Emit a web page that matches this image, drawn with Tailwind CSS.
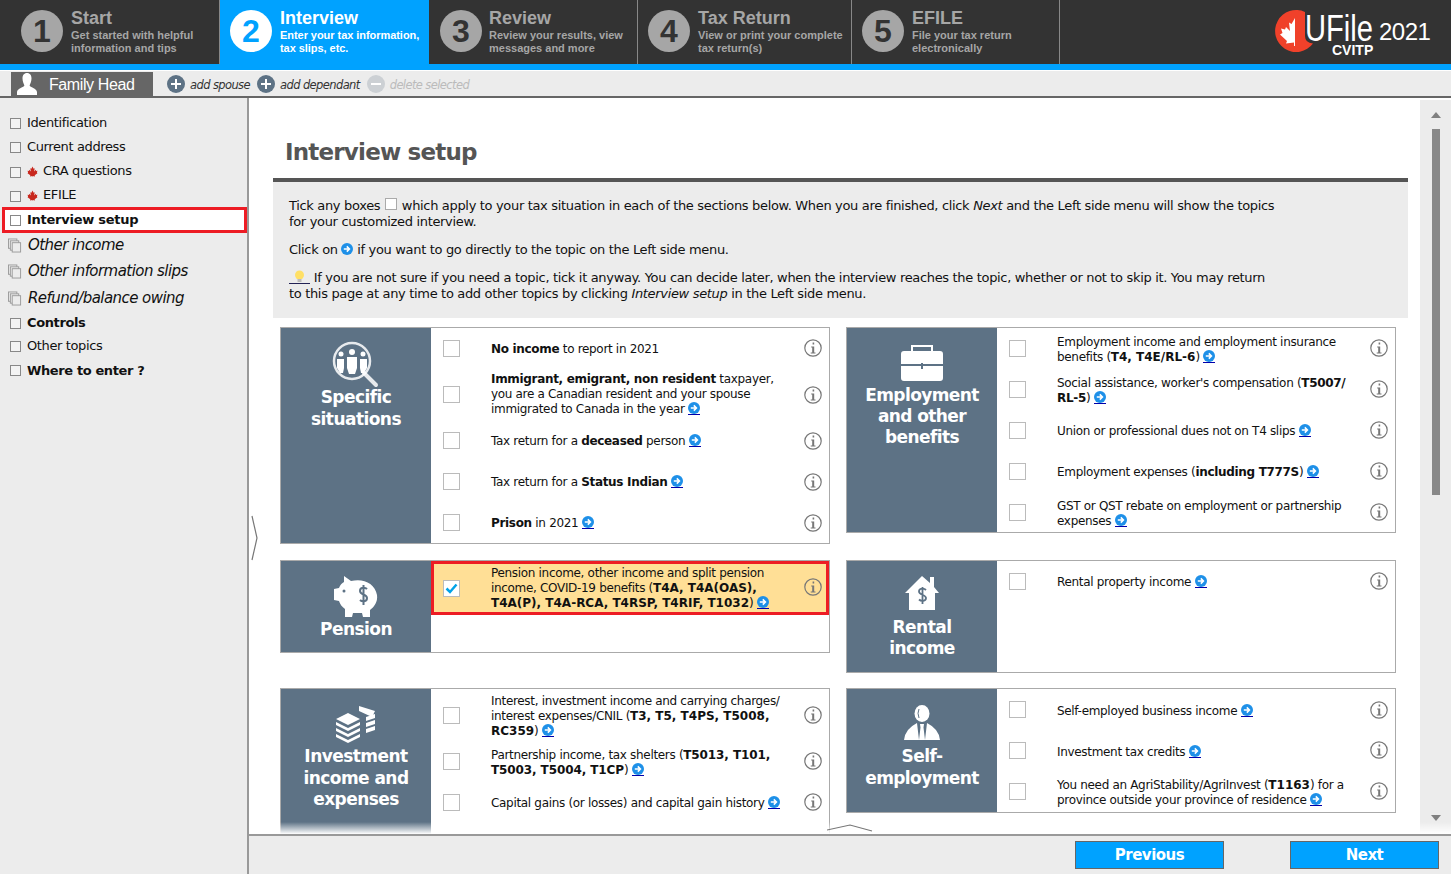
<!DOCTYPE html>
<html>
<head>
    <title>UFile 2021 - Interview setup</title>
    <script src="https://cdn.jsdelivr.net/npm/@tailwindcss/browser@4"></script>
</head>
<body class="font-['DejaVu_Sans',sans-serif] text-[#111]">
    <svg class="hidden">
        <symbol id="info" viewBox="0 0 18 18">
            <circle cx="9" cy="9" r="8.2" fill="none" stroke="#777" stroke-width="1.2"/>
            <path d="M8.6 3.6h1.6v1.8H8.6zM7.2 7.4h3v6h1.3v1H6.7v-1h1.5V8.4h-1z" fill="#777"/>
        </symbol>
        <symbol id="go" viewBox="0 0 12 12">
            <circle cx="6" cy="6" r="6" fill="#1e90e8"/>
            <path d="M2.8 6h5M5.8 3.4 8.4 6 5.8 8.6" fill="none" stroke="#fff" stroke-width="1.6"/>
        </symbol>
        <symbol id="leaf" viewBox="0 0 20 20">
            <path d="M10 1 8 5 6 4l1 6-3-3-.6 2L1 8.600l1 3.400-1 1 5 4-.5 2 4.200-.6V20h.6v-1.600l4.200.6-.5-2 5-4-1-1 1-3.400-2.400.4-.6-2-3 3 1-6-2 1z" fill="#c8281e"/>
        </symbol>
        <symbol id="pages" viewBox="0 0 15 15">
            <rect x="0.500" y="0.500" width="9" height="10" fill="#ececec" stroke="#999"/>
            <rect x="2.500" y="2.500" width="9" height="10" fill="#ececec" stroke="#999"/>
            <rect x="4.500" y="4.500" width="9" height="10" fill="#ececec" stroke="#999"/>
        </symbol>
    </svg>

    <div class="relative flex flex-col w-[1451px] h-[874px] overflow-hidden bg-white">
        <!-- step bar -->
        <div class="flex h-16 shrink-0 bg-[#333] font-['Liberation_Sans',sans-serif]">
            <div class="flex w-[219px] pl-[21px] pt-[10px] gap-2">
                <div class="flex items-center justify-center w-[42px] h-[42px] rounded-full bg-[#a6a6a6] text-[#333] text-[32px] font-bold">1</div>
                <div class="text-[#a6a6a6]">
                    <p class="text-[18px] leading-[17px] font-bold">Start</p>
                    <p class="mt-[2px] text-[11px] leading-[13px] font-bold">Get started with helpful<br>information and tips</p>
                </div>
            </div>
            <div class="flex w-[210px] pl-[10px] pt-[10px] gap-2 bg-[#00a2ff] border-l border-[#888]">
                <div class="flex items-center justify-center w-[42px] h-[42px] rounded-full bg-white text-[#00a2ff] text-[32px] font-bold">2</div>
                <div class="text-white">
                    <p class="text-[18px] leading-[17px] font-bold">Interview</p>
                    <p class="mt-[2px] text-[11px] leading-[13px] font-bold tracking-[-0.05px]">Enter your tax information,<br>tax slips, etc.</p>
                </div>
            </div>
            <div class="flex w-[209px] pl-[11px] pt-[10px] gap-[7px] border-r border-[#888]">
                <div class="flex items-center justify-center w-[42px] h-[42px] rounded-full bg-[#a6a6a6] text-[#333] text-[32px] font-bold">3</div>
                <div class="text-[#a6a6a6]">
                    <p class="text-[18px] leading-[17px] font-bold">Review</p>
                    <p class="mt-[2px] text-[11px] leading-[13px] font-bold">Review your results, view<br>messages and more</p>
                </div>
            </div>
            <div class="flex w-[214px] pl-[10px] pt-[10px] gap-2 border-r border-[#888]">
                <div class="flex items-center justify-center w-[42px] h-[42px] rounded-full bg-[#a6a6a6] text-[#333] text-[32px] font-bold">4</div>
                <div class="text-[#a6a6a6]">
                    <p class="text-[18px] leading-[17px] font-bold">Tax Return</p>
                    <p class="mt-[2px] text-[11px] leading-[13px] font-bold">View or print your complete<br>tax return(s)</p>
                </div>
            </div>
            <div class="flex w-[208px] pl-[10px] pt-[10px] gap-2 border-r border-[#888]">
                <div class="flex items-center justify-center w-[42px] h-[42px] rounded-full bg-[#a6a6a6] text-[#333] text-[32px] font-bold">5</div>
                <div class="text-[#a6a6a6]">
                    <p class="text-[18px] leading-[17px] font-bold">EFILE</p>
                    <p class="mt-[2px] text-[11px] leading-[13px] font-bold">File your tax return<br>electronically</p>
                </div>
            </div>
            <!-- logo -->
            <div class="flex-1 flex justify-end pr-[19px] pt-[10px]">
                <div class="relative w-[158px] h-[48px]">
                    <svg class="absolute left-[1px] top-0" width="42" height="42" viewBox="0 0 42 42">
                        <path d="M30 2V26Q30 33 38 33.500A21 21 0 1 1 30 2Z" fill="#f0412a"/>
                        <path d="M20 8 16.500 14 14 12.500 15 21 11 17 10 19.500 6 18.500 7.500 23 5 24.500 12 31 11 33.500 19 32.500V36H20Z" fill="#fff"/>
                    </svg>
                    <span class="absolute left-[31px] top-[4px] text-[36px] leading-[30px] text-white origin-left scale-x-[.81]">UFile</span>
                    <span class="absolute left-[105px] top-[10px] text-[24px] leading-[24px] text-white tracking-[-0.5px]">2021</span>
                    <span class="absolute left-[58px] top-[34px] text-[14px] leading-[12px] font-bold text-white">CVITP</span>
                </div>
            </div>
        </div>
        <div class="h-[6px] shrink-0 bg-[#00a2ff]"></div>

        <!-- family bar -->
        <div class="flex items-end h-[28px] shrink-0 pl-[11px] bg-[#ececec] border-t border-white border-b-2 border-b-[#666]">
            <div class="flex items-center w-[142px] h-[24px] pl-[6px] gap-3 bg-[#666] text-white font-['Liberation_Sans',sans-serif] text-[16px] tracking-[-0.4px]">
                <svg width="20" height="22" viewBox="0 0 20 22"><path d="M10 0c3 0 4.500 2.300 4.500 5.500S13 11 12.600 12.500c0 1.500 7.400 3 7.400 6.500v3H0v-3c0-3.500 7.400-5 7.400-6.500C7 11 5.500 8.700 5.500 5.500S7 0 10 0z" fill="#fff"/></svg>
                <span class="pt-[2px]">Family Head</span>
            </div>
            <div class="flex items-center h-[24px] pl-[14px] gap-[5px] text-[11.500px] italic text-[#333] tracking-[-0.6px]">
                <span class="flex items-center justify-center w-[18px] h-[18px] rounded-full bg-[#5d7285]"><svg width="10" height="10" viewBox="0 0 10 10"><path d="M5 0v10M0 5h10" stroke="#fff" stroke-width="2"/></svg></span>
                <span class="mr-[2px] pt-[3px]">add spouse</span>
                <span class="flex items-center justify-center w-[18px] h-[18px] rounded-full bg-[#5d7285]"><svg width="10" height="10" viewBox="0 0 10 10"><path d="M5 0v10M0 5h10" stroke="#fff" stroke-width="2"/></svg></span>
                <span class="mr-[2px] pt-[3px]">add dependant</span>
                <span class="flex items-center justify-center w-[18px] h-[18px] rounded-full bg-[#ccd0d4]"><svg width="10" height="10" viewBox="0 0 10 10"><path d="M0 5h10" stroke="#fff" stroke-width="2"/></svg></span>
                <span class="pt-[3px] text-[#bbb]">delete selected</span>
            </div>
        </div>

        <div class="flex flex-1 min-h-0">
            <!-- left menu -->
            <aside class="relative w-[249px] shrink-0 pt-[12px] bg-[#ececec] border-r-2 border-[#999] text-[13px] tracking-[-0.38px]">
                <div class="flex items-center h-[24.500px] pl-[10px] gap-[6px]"><span class="w-[11px] h-[11px] mt-[2px] bg-white/40 border border-[#888]"></span>Identification</div>
                <div class="flex items-center h-[24.500px] pl-[10px] gap-[6px]"><span class="w-[11px] h-[11px] mt-[2px] bg-white/40 border border-[#888]"></span>Current address</div>
                <div class="flex items-center h-[24px] pl-[10px] gap-[6px]"><span class="w-[11px] h-[11px] mt-[2px] bg-white/40 border border-[#888]"></span><svg class="-mr-[1px]" width="11" height="11"><use href="#leaf"/></svg>CRA questions</div>
                <div class="flex items-center h-[24px] pl-[10px] gap-[6px]"><span class="w-[11px] h-[11px] mt-[2px] bg-white/40 border border-[#888]"></span><svg class="-mr-[1px]" width="11" height="11"><use href="#leaf"/></svg>EFILE</div>
                <div class="flex items-center h-[26px] ml-[2px] pl-[5px] gap-[6px] bg-white border-[3px] border-[#ed1c24] font-bold tracking-[-0.25px]"><span class="w-[11px] h-[11px] border border-[#888]"></span>Interview setup</div>
                <div class="flex items-center h-[25px] pl-[8px] gap-[6px] text-[15px] italic tracking-[-0.55px]"><svg width="14" height="15"><use href="#pages"/></svg>Other income</div>
                <div class="flex items-center h-[27px] pl-[8px] gap-[6px] text-[15px] italic tracking-[-0.55px]"><svg width="14" height="15"><use href="#pages"/></svg>Other information slips</div>
                <div class="flex items-center h-[27px] pl-[8px] gap-[6px] text-[15px] italic tracking-[-0.55px]"><svg width="14" height="15"><use href="#pages"/></svg>Refund/balance owing</div>
                <div class="flex items-center h-[22px] pl-[10px] gap-[6px] font-bold"><span class="w-[11px] h-[11px] bg-white/40 border border-[#888]"></span>Controls</div>
                <div class="flex items-center h-[24px] pl-[10px] gap-[6px]"><span class="w-[11px] h-[11px] bg-white/40 border border-[#888]"></span>Other topics</div>
                <div class="flex items-center h-[25px] pl-[10px] gap-[6px] font-bold"><span class="w-[11px] h-[11px] bg-white/40 border border-[#888]"></span>Where to enter ?</div>
                <svg class="absolute left-[250px] top-[417px] z-10" width="10" height="46" viewBox="0 0 10 46"><path d="M2 1l5 22-5 22" fill="none" stroke="#777" stroke-width="1.200"/></svg>
            </aside>

            <div class="flex flex-col flex-1 min-w-0">
                <div class="relative flex flex-1 min-h-0">
                    <!-- page content -->
                    <main class="w-[1171px] h-[736px] pl-[24px] pr-[12px] overflow-hidden">
                        <h1 class="pl-[12px] pt-[39px] h-[80px] text-[23px] leading-[30px] font-bold text-[#555] tracking-[-0.8px]">Interview setup</h1>
                        <div class="h-[140px] pl-[16px] pt-[16px] bg-[#ececec] border-t-4 border-[#555] text-[13px] leading-[16px] tracking-[-0.33px]">
                            <p>Tick any boxes <span class="inline-block w-[12px] h-[12px] mx-[1px] bg-white border border-[#aaa]"></span> which apply to your tax situation in each of the sections below. When you are finished, click <i>Next</i> and the Left side menu will show the topics<br>for your customized interview.</p>
                            <p class="mt-[12px]">Click on <svg class="inline-block align-[-1px]" width="12" height="12"><use href="#go"/></svg> if you want to go directly to the topic on the Left side menu.</p>
                            <p class="mt-[12px]"><svg class="inline-block align-[-2px]" width="21" height="14" viewBox="0 0 21 14"><circle cx="10.500" cy="5" r="4.500" fill="#ffe066"/><rect x="8.500" y="9" width="4" height="3" fill="#bbb"/><path d="M0 13.500h21" stroke="#225"/></svg> If you are not sure if you need a topic, tick it anyway. You can decide later, when the interview reaches the topic, whether or not to skip it. You may return<br>to this page at any time to add other topics by clicking <i>Interview setup</i> in the Left side menu.</p>
                        </div>

                        <div class="flex gap-x-4 pl-[7px] pt-[9px] text-[12px] leading-[15px] tracking-[-0.32px]">
                            <div class="flex flex-col w-[550px]">
                                <!-- specific situations -->
                                <section class="flex h-[217px] border border-[#aaa]">
                                    <div class="w-[150px] pt-[13px] shrink-0 bg-[#5d7285] text-center text-white text-[17px] leading-[22px] font-bold tracking-[-0.55px]">
                                        <svg class="mx-auto" width="50" height="47" viewBox="0 0 50 47" fill="none"><circle cx="21" cy="20" r="18" stroke="#fff" stroke-width="2.500" opacity=".85"/><path d="M33 32l12 12" stroke="#fff" stroke-width="4" stroke-linecap="round" opacity=".85"/><circle cx="21" cy="11" r="3" fill="#fff"/><path d="M16 16h10v11l-2 6h-6l-2-6z" fill="#fff"/><circle cx="10" cy="13" r="2.500" fill="#fff"/><path d="M6 18h7v9l-1 5H9l-3-5z" fill="#fff"/><circle cx="32" cy="13" r="2.500" fill="#fff"/><path d="M29 18h7v9l-3 5h-3l-1-5z" fill="#fff"/></svg>
                                        <p class="-mt-[2px]">Specific<br>situations</p>
                                    </div>
                                    <div class="flex-1">
                                        <div class="flex items-center h-[41px] pl-[12px] pr-[7px]"><span class="w-[17px] h-[17px] shrink-0 border border-[#bbb]"></span><p class="flex-1 ml-[31px] pt-[2px]"><b>No income</b> to report in 2021</p><svg class="-mt-[2px]" width="18" height="18"><use href="#info"/></svg></div>
                                        <div class="flex items-center h-[51px] pl-[12px] pr-[7px]"><span class="w-[17px] h-[17px] shrink-0 border border-[#bbb]"></span><p class="flex-1 ml-[31px]"><b>Immigrant, emigrant, non resident</b> taxpayer,<br>you are a Canadian resident and your spouse<br>immigrated to Canada in the year <svg class="inline-block border-b border-[#00a] align-[-2px]" width="12" height="13"><use href="#go" height="12"/></svg></p><svg width="18" height="18"><use href="#info"/></svg></div>
                                        <div class="flex items-center h-[41px] pl-[12px] pr-[7px]"><span class="w-[17px] h-[17px] shrink-0 border border-[#bbb]"></span><p class="flex-1 ml-[31px] pt-[2px]">Tax return for a <b>deceased</b> person <svg class="inline-block border-b border-[#00a] align-[-2px]" width="12" height="13"><use href="#go" height="12"/></svg></p><svg width="18" height="18"><use href="#info"/></svg></div>
                                        <div class="flex items-center h-[41px] pl-[12px] pr-[7px]"><span class="w-[17px] h-[17px] shrink-0 border border-[#bbb]"></span><p class="flex-1 ml-[31px] pt-[2px]">Tax return for a <b>Status Indian</b> <svg class="inline-block border-b border-[#00a] align-[-2px]" width="12" height="13"><use href="#go" height="12"/></svg></p><svg width="18" height="18"><use href="#info"/></svg></div>
                                        <div class="flex items-center h-[41px] pl-[12px] pr-[7px]"><span class="w-[17px] h-[17px] shrink-0 border border-[#bbb]"></span><p class="flex-1 ml-[31px] pt-[2px]"><b>Prison</b> in 2021 <svg class="inline-block border-b border-[#00a] align-[-2px]" width="12" height="13"><use href="#go" height="12"/></svg></p><svg width="18" height="18"><use href="#info"/></svg></div>
                                    </div>
                                </section>

                                <!-- pension -->
                                <section class="flex h-[93px] mt-[16px] border border-[#aaa]">
                                    <div class="w-[150px] pt-[15px] shrink-0 bg-[#5d7285] text-center text-white text-[17px] leading-[22px] font-bold tracking-[-0.55px]">
                                        <svg class="mx-auto" width="44" height="41" viewBox="0 0 44 41"><path d="M10 0l7 5c12-3 24 2 26 14 1 7-3 12-7 15v7h-7l-1-4h-9l-1 4h-7v-8c-3-2-5-5-6-8l-5-1V13l5-1c1-3 3-5 5-6z" fill="#fff"/><path d="M33 13c-2-2-7-2-7 2s7 3 7 7-5 4-7 2M29.500 9v20" fill="none" stroke="#5d7285" stroke-width="2"/><circle cx="10" cy="15" r="1.500" fill="#5d7285"/></svg>
                                        <p class="mt-[1px]">Pension</p>
                                    </div>
                                    <div class="flex-1">
                                        <div class="flex items-center h-[54px] pl-[9px] pr-[4px] bg-[#ffdf96] border-[3px] border-[#ed1c24]"><span class="flex items-center justify-center w-[17px] h-[17px] shrink-0 bg-white border border-[#bbb]"><svg width="13" height="11" viewBox="0 0 13 11"><path d="M1.500 5.500 5 9l6.500-7.500" fill="none" stroke="#00a2e8" stroke-width="2.500"/></svg></span><p class="flex-1 ml-[31px]">Pension income, other income and split pension<br>income, COVID-19 benefits (<b class="tracking-normal">T4A, T4A(OAS),<br>T4A(P), T4A-RCA, T4RSP, T4RIF, T1032</b>) <svg class="inline-block border-b border-[#00a] align-[-2px]" width="12" height="13"><use href="#go" height="12"/></svg></p><svg class="-mt-[2px]" width="18" height="18"><use href="#info"/></svg></div>
                                    </div>
                                </section>

                                <!-- investment -->
                                <section class="flex h-[200px] mt-[35px] border border-[#aaa]">
                                    <div class="w-[150px] pt-[16px] shrink-0 bg-[#5d7285] text-center text-white text-[17px] leading-[21.500px] font-bold tracking-[-0.55px]">
                                        <svg class="mx-auto" width="42" height="38" viewBox="0 0 42 38"><path d="M13 8l12 6-12 6-12-6zM1 17l12 6 12-6v3l-12 6-12-6zM1 23l12 6 12-6v3l-12 6-12-6zM1 29l12 6 12-6v3l-12 6-12-6z" fill="#fff"/><path d="M24 1l16 5-3 6-13-6zM31 12l9-3v4l-9 3zM31 18l9-3v4l-9 3zM31 24l9-3v4l-9 3z" fill="#fff"/></svg>
                                        <p class="mt-[3px]">Investment<br>income and<br>expenses</p>
                                    </div>
                                    <div class="flex-1">
                                        <div class="flex items-center h-[52px] pl-[12px] pr-[7px]"><span class="w-[17px] h-[17px] shrink-0 border border-[#bbb]"></span><p class="flex-1 ml-[31px] pt-[2px]">Interest, investment income and carrying charges/<br>interest expenses/CNIL (<b class="tracking-normal">T3, T5, T4PS, T5008,<br>RC359</b>) <svg class="inline-block border-b border-[#00a] align-[-2px]" width="12" height="13"><use href="#go" height="12"/></svg></p><svg width="18" height="18"><use href="#info"/></svg></div>
                                        <div class="flex items-center h-[41px] pl-[12px] pr-[7px]"><span class="w-[17px] h-[17px] shrink-0 border border-[#bbb]"></span><p class="flex-1 ml-[31px] pt-[2px]">Partnership income, tax shelters (<b class="tracking-[-0.1px]">T5013, T101,<br>T5003, T5004, T1CP</b>) <svg class="inline-block border-b border-[#00a] align-[-2px]" width="12" height="13"><use href="#go" height="12"/></svg></p><svg class="-mt-[2px]" width="18" height="18"><use href="#info"/></svg></div>
                                        <div class="flex items-center h-[41px] pl-[12px] pr-[7px]"><span class="w-[17px] h-[17px] shrink-0 border border-[#bbb]"></span><p class="flex-1 ml-[31px] pt-[2px]">Capital gains (or losses) and capital gain history <svg class="inline-block border-b border-[#00a] align-[-2px]" width="12" height="13"><use href="#go" height="12"/></svg></p><svg class="-mt-[2px]" width="18" height="18"><use href="#info"/></svg></div>
                                    </div>
                                </section>
                            </div>

                            <div class="flex flex-col w-[550px]">
                                <!-- employment -->
                                <section class="flex h-[206px] border border-[#aaa]">
                                    <div class="w-[150px] pt-[16px] shrink-0 bg-[#5d7285] text-center text-white text-[17px] leading-[21px] font-bold tracking-[-0.6px]">
                                        <svg class="mx-auto" width="42" height="37" viewBox="0 0 42 37"><path d="M11 8V2h20v6" fill="none" stroke="#fff" stroke-width="2"/><path d="M0 10q0-3 3-3h36q3 0 3 3v10H22v-1h-2v1H0zM0 22h20v3h2v-3h20v12q0 3-3 3H3q-3 0-3-3z" fill="#fff"/></svg>
                                        <p class="mt-[4px]">Employment<br>and other<br>benefits</p>
                                    </div>
                                    <div class="flex-1">
                                        <div class="flex items-center h-[41px] pl-[12px] pr-[7px]"><span class="w-[17px] h-[17px] shrink-0 border border-[#bbb]"></span><p class="flex-1 ml-[31px] pt-[2px] whitespace-nowrap">Employment income and employment insurance<br>benefits (<b class="tracking-normal">T4, T4E/RL-6</b>) <svg class="inline-block border-b border-[#00a] align-[-2px]" width="12" height="13"><use href="#go" height="12"/></svg></p><svg class="-mt-[2px]" width="18" height="18"><use href="#info"/></svg></div>
                                        <div class="flex items-center h-[41px] pl-[12px] pr-[7px]"><span class="w-[17px] h-[17px] shrink-0 border border-[#bbb]"></span><p class="flex-1 ml-[31px] pt-[2px] whitespace-nowrap">Social assistance, worker's compensation (<b>T5007/<br>RL-5</b>) <svg class="inline-block border-b border-[#00a] align-[-2px]" width="12" height="13"><use href="#go" height="12"/></svg></p><svg class="-mt-[2px]" width="18" height="18"><use href="#info"/></svg></div>
                                        <div class="flex items-center h-[41px] pl-[12px] pr-[7px]"><span class="w-[17px] h-[17px] shrink-0 border border-[#bbb]"></span><p class="flex-1 ml-[31px] pt-[2px]">Union or professional dues not on T4 slips <svg class="inline-block border-b border-[#00a] align-[-2px]" width="12" height="13"><use href="#go" height="12"/></svg></p><svg class="-mt-[2px]" width="18" height="18"><use href="#info"/></svg></div>
                                        <div class="flex items-center h-[41px] pl-[12px] pr-[7px]"><span class="w-[17px] h-[17px] shrink-0 border border-[#bbb]"></span><p class="flex-1 ml-[31px] pt-[2px]">Employment expenses (<b>including T777S</b>) <svg class="inline-block border-b border-[#00a] align-[-2px]" width="12" height="13"><use href="#go" height="12"/></svg></p><svg class="-mt-[2px]" width="18" height="18"><use href="#info"/></svg></div>
                                        <div class="flex items-center h-[41px] pl-[12px] pr-[7px]"><span class="w-[17px] h-[17px] shrink-0 border border-[#bbb]"></span><p class="flex-1 ml-[31px] pt-[2px]">GST or QST rebate on employment or partnership<br>expenses <svg class="inline-block border-b border-[#00a] align-[-2px]" width="12" height="13"><use href="#go" height="12"/></svg></p><svg class="-mt-[2px]" width="18" height="18"><use href="#info"/></svg></div>
                                    </div>
                                </section>

                                <!-- rental -->
                                <section class="flex h-[113px] mt-[27px] border border-[#aaa]">
                                    <div class="w-[150px] pt-[15px] shrink-0 bg-[#5d7285] text-center text-white text-[17px] leading-[21px] font-bold tracking-[-0.55px]">
                                        <svg class="mx-auto" width="34" height="34" viewBox="0 0 34 34"><path d="M17 0 25 7V1h4v10l5 6h-4v17H4V17H0z" fill="#fff"/><path d="M21 14c-2-2-7-2-7 1.500s7 3 7 6.500-5 3.500-7 1.500M17.500 11v17" fill="none" stroke="#5d7285" stroke-width="1.800"/></svg>
                                        <p class="mt-[7px]">Rental<br>income</p>
                                    </div>
                                    <div class="flex-1">
                                        <div class="flex items-center h-[40px] pl-[12px] pr-[7px]"><span class="w-[17px] h-[17px] shrink-0 border border-[#bbb]"></span><p class="flex-1 ml-[31px] pt-[2px]">Rental property income <svg class="inline-block border-b border-[#00a] align-[-2px]" width="12" height="13"><use href="#go" height="12"/></svg></p><svg width="18" height="18"><use href="#info"/></svg></div>
                                    </div>
                                </section>

                                <!-- self employment -->
                                <section class="flex h-[125px] mt-[15px] border border-[#aaa]">
                                    <div class="w-[150px] pt-[16px] shrink-0 bg-[#5d7285] text-center text-white text-[17px] leading-[22px] font-bold tracking-[-0.6px]">
                                        <svg class="mx-auto" width="36" height="35" viewBox="0 0 36 35"><ellipse cx="18" cy="8.500" rx="7.500" ry="8.500" fill="#fff"/><path d="M15 4Q13 8 15 13" fill="none" stroke="#5d7285"/><path d="M0 35Q1 24 13 18L15 35ZM36 35Q35 24 23 18L21 35Z" fill="#fff"/><path d="M16 19h4l-.5 3.500L21 35h-6l1.500-12.500z" fill="#fff"/></svg>
                                        <p class="mt-[5px]">Self-<br>employment</p>
                                    </div>
                                    <div class="flex-1">
                                        <div class="flex items-center h-[41px] pl-[12px] pr-[7px]"><span class="w-[17px] h-[17px] shrink-0 border border-[#bbb]"></span><p class="flex-1 ml-[31px] pt-[4px]">Self-employed business income <svg class="inline-block border-b border-[#00a] align-[-2px]" width="12" height="13"><use href="#go" height="12"/></svg></p><svg width="18" height="18"><use href="#info"/></svg></div>
                                        <div class="flex items-center h-[41px] pl-[12px] pr-[7px]"><span class="w-[17px] h-[17px] shrink-0 border border-[#bbb]"></span><p class="flex-1 ml-[31px] pt-[4px]">Investment tax credits <svg class="inline-block border-b border-[#00a] align-[-2px]" width="12" height="13"><use href="#go" height="12"/></svg></p><svg class="-mt-[2px]" width="18" height="18"><use href="#info"/></svg></div>
                                        <div class="flex items-center h-[41px] pl-[12px] pr-[7px]"><span class="w-[17px] h-[17px] shrink-0 border border-[#bbb]"></span><p class="flex-1 ml-[31px] pt-[2px]">You need an AgriStability/AgriInvest (<b class="tracking-normal">T1163</b>) for a<br>province outside your province of residence <svg class="inline-block border-b border-[#00a] align-[-2px]" width="12" height="13"><use href="#go" height="12"/></svg></p><svg class="-mt-[2px]" width="18" height="18"><use href="#info"/></svg></div>
                                    </div>
                                </section>
                            </div>
                        </div>
                    </main>

                    <!-- scrollbar -->
                    <div class="flex flex-col items-center w-[31px] mt-[2px] pt-[12px] bg-[#ececec]">
                        <svg width="10" height="6" viewBox="0 0 10 6"><path d="M5 0l5 6H0z" fill="#808080"/></svg>
                        <div class="w-[8px] h-[366px] mt-[11px] bg-[#888]"></div>
                        <svg class="mt-[320px]" width="10" height="6" viewBox="0 0 10 6"><path d="M5 6l5-6H0z" fill="#808080"/></svg>
                    </div>
                    <div class="absolute left-0 right-0 bottom-0 h-[12px] bg-gradient-to-b from-white/0 to-white"></div>
                    <svg class="absolute left-[578px] bottom-[2px]" width="46" height="8" viewBox="0 0 46 8"><path d="M0 6 23 1l22 6" fill="none" stroke="#777" stroke-width="1.200"/></svg>
                </div>

                <!-- footer -->
                <div class="flex justify-end items-center h-[40px] shrink-0 pr-[12px] gap-[66px] bg-[#ececec] border-t-2 border-[#999]">
                    <button class="w-[149px] h-[28px] bg-[#00a2ff] border border-[#666] text-white text-[15px] font-bold tracking-[-0.5px]">Previous</button>
                    <button class="w-[149px] h-[28px] bg-[#00a2ff] border border-[#666] text-white text-[15px] font-bold tracking-[-0.5px]">Next</button>
                </div>
            </div>
        </div>
    </div>
</body>
</html>
